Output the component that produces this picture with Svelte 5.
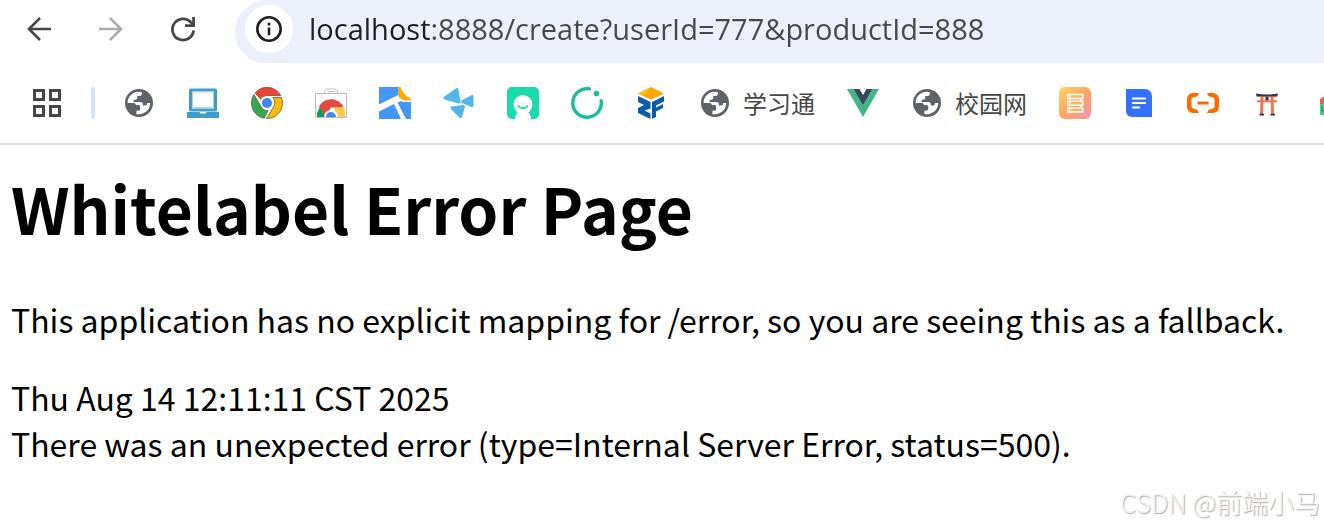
<script lang="ts">
  type Bookmark = { icon: string; label?: string; title: string };

  let url = $state('localhost:8888/create?userId=777&productId=888');

  const bookmarks: Bookmark[] = [
    { icon: 'globe', title: 'Site' },
    { icon: 'laptop', title: 'Laptop' },
    { icon: 'chrome', title: 'Chrome' },
    { icon: 'store', title: 'Web Store' },
    { icon: 'map', title: 'Map' },
    { icon: 'fan', title: 'Fan' },
    { icon: 'face', title: 'Face' },
    { icon: 'ring', title: 'Ring' },
    { icon: 'cube', title: 'ZF' },
    { icon: 'globe', label: '学习通', title: '学习通' },
    { icon: 'vue', title: 'Vue' },
    { icon: 'globe', label: '校园网', title: '校园网' },
    { icon: 'server', title: 'Server' },
    { icon: 'doc', title: 'Docs' },
    { icon: 'cloud', title: 'Cloud' },
    { icon: 'torii', title: 'Torii' },
    { icon: 'house', title: 'House' },
  ];
</script>

<div class="browser">
  <header class="toolbar">
    <nav class="nav">
      <button aria-label="Back">
        <svg viewBox="0 0 32 32" fill="none" stroke="#474747" stroke-width="2.6">
          <path d="M28 16H6M17 5 6 16l11 11" />
        </svg>
      </button>
      <button aria-label="Forward" disabled>
        <svg viewBox="0 0 32 32" fill="none" stroke="#ababab" stroke-width="2.6">
          <path d="M4 16h22M15 5l11 11-11 11" />
        </svg>
      </button>
      <button aria-label="Reload">
        <svg viewBox="0 0 32 32" fill="none" stroke="#474747" stroke-width="2.8">
          <path d="M26.6 17.500A10.600 10.600 0 1 1 24.600 10.200L26 12M26.600 4v8.600H18" />
        </svg>
      </button>
    </nav>
    <div class="omnibox">
      <button class="info" aria-label="View site information">
        <svg viewBox="0 0 28 28" fill="none" stroke="#1f1f1f" stroke-width="2.6">
          <circle cx="14" cy="14" r="11.7" />
          <path d="M14 12.600v7.600M14 7.800v2.600" />
        </svg>
      </button>
      <input class="url" type="text" aria-label="Address" spellcheck="false" bind:value={url} />
    </div>
  </header>

  <nav class="bookmarks" aria-label="Bookmarks">
    <button class="apps" aria-label="All apps">
      <svg viewBox="0 0 28 28" fill="none" stroke="#474747" stroke-width="3">
        <path d="M1.500 1.500h9v9h-9zM17.500 1.500h9v9h-9zM1.500 17.500h9v9h-9zM17.500 17.500h9v9h-9z" />
      </svg>
    </button>
    <span class="separator"></span>
    {#each bookmarks as { icon, label, title }}
      <a class="bookmark" href="#top" {title} aria-label={title}>
        <svg viewBox="0 0 32 32" aria-hidden="true">
          {#if icon === 'globe'}
            <circle cx="16" cy="16" r="14" fill="#5f6368" />
            <path fill="#fff" d="M4.600 16C4.600 9.500 9.700 4.800 16 4.800l2.800.4v1.600c0 1.500-1 2.300-2.600 2.300h-2v2c0 1-.8 1.700-1.800 1.700h-1.800V15h6.600c1.600 0 2.600.9 2.600 2v1.500h2.400c1.500 0 1.800-1.200 1.800-2.500h3.200C27.200 22.500 22 27.200 16 27.200c-1 0-1.600 0-2.600-.3v-3.200H15c1.400 0 2.200-.8 2.200-2v-1.800c0-1.200-.8-1.900-2-1.900h-2L11.500 16z" />
          {:else if icon === 'laptop'}
            <path fill="none" stroke="#3e9dcd" stroke-width="3" stroke-linejoin="round" d="M3.500 3h25v20h-25z" />
            <path fill="none" stroke="#a9d5ea" d="M5.500 5h21v15.500h-21z" />
            <path fill="#3e9dcd" d="M0 25h12.500l1 1.600h5l1-1.600H32v6H0z" />
          {:else if icon === 'chrome'}
            <circle cx="16" cy="16" r="15.500" fill="#fff" />
            <g stroke="#6b5a35" stroke-width=".8">
              <path fill="#ea4335" d="M4 6A15.500 15.500 0 0 1 29.700 8.500H16A8 8 0 0 0 9.500 12z" />
              <path fill="#34a853" d="M3 7.500 10 19.500a7.500 7.500 0 0 0 7 4L13.300 31.300A15.500 15.500 0 0 1 3 7.500z" />
              <path fill="#fbbc05" d="M30.500 10.500A15.500 15.500 0 0 1 15.500 31.500L22.500 20a7.500 7.500 0 0 0-.8-9.500z" />
            </g>
            <circle cx="16" cy="16" r="5" fill="#4285f4" />
          {:else if icon === 'store'}
            <path fill="#fff" stroke="#bbb" d="M.5 6.500h31v24H.5zM9.500 6.500v-2l2-2.500h9l2 2.500v2zM12.500 4.500h7" />
            <path fill="#e04a3f" d="M4 20C8 10 24 9 28.500 20.500H16l-5.500 9z" />
            <path fill="#0f9d58" d="M2 30v-4l3-6 5.500 10z" />
            <path fill="#ffcd40" d="M19 20.500h10.500L30 30h-9z" />
            <path fill="#fff" d="M9 30a7 7 0 1 1 14 0z" />
            <path fill="#4285f4" d="M11 30a5 5 0 1 1 10 0z" />
          {:else if icon === 'map'}
            <path fill="#4397fb" d="M0 0h32v32H0z" />
            <path fill="#fff" d="M20 0h12v15h-9zM0 17.500 19 8l4.500 5.500-5 2L27 32h-5l-7-15L0 24.500z" />
            <path fill="#f9ab0b" d="M19 0h2.500c1.500 5 5 9 10.500 12v1.500h-8L19 9z" />
          {:else if icon === 'fan'}
            <g fill="#51b7e8" stroke="#51b7e8" stroke-width="3" stroke-linejoin="round">
              <path d="M2 11 14 2.500l2 12.500zM19.500 14.500 29 9.500v9zM9 21l11.500-1.500-3 10z" />
            </g>
          {:else if icon === 'face'}
            <rect width="32" height="32" rx="5" fill="#18dcab" />
            <circle cx="16" cy="17.500" r="9.500" fill="#fff" />
            <path fill="#fff" d="M8 32c.3-3.500 1.500-6 3-7h10c1.500 1 2.700 3.500 3 7z" />
            <path fill="none" stroke="#18dcab" stroke-width="1.800" stroke-linecap="round" d="M11.500 19c2 3 7 3 9 0" />
          {:else if icon === 'ring'}
            <path fill="none" stroke="#19bc9c" stroke-width="3.400" stroke-linecap="round" d="M18.500 1.900A14.300 14.300 0 1 0 30.200 13.800" />
            <circle cx="25.500" cy="6.500" r="2.800" fill="#19bc9c" />
          {:else if icon === 'cube'}
            <path fill="#faa707" d="m16 0 13 6.500-13 6.200L3 6.500z" />
            <path fill="#fbc313" d="M16 0 3 6.500l5 2.400z" />
            <path fill="#0b5cad" d="m3 9 12.500 6v6.500l-6 2 6 3V32L3 26v-5l6-3-6-3zM29 9l-12 6v17l4-2v-5.500l7-3.500v-4l-7 3.500v-2l8-4z" />
          {:else if icon === 'vue'}
            <path fill="#41b883" d="M0 2h6.500L16 18.500 25.500 2H32L16 30z" />
            <path fill="#35495e" d="M6.500 2h6L16 8l3.500-6h6L16 18.500z" />
          {:else if icon === 'server'}
            <defs>
              <linearGradient id="peach" x1="0" y1="0" x2="1" y2="1">
                <stop offset="0" stop-color="#ffd65c" />
                <stop offset=".5" stop-color="#ffa762" />
                <stop offset="1" stop-color="#f490b0" />
              </linearGradient>
            </defs>
            <rect width="32" height="32" rx="6" fill="url(#peach)" />
            <path fill="#ffb45e" stroke="#fff" stroke-width="1.500" d="M8.700 7.500h15v4h-15zM8.700 14.200h15v4h-15zM8.700 21h15v4h-15z" />
            <path stroke="#fff" stroke-width="1.200" d="M11 8v3M11 14.500v3M11 21.500v3M10.500 11.500v3M22 11.500v3M10.500 18v3M22 18v3" />
          {:else if icon === 'doc'}
            <path fill="#3370ff" d="M3 2h19a7 7 0 0 1 7 7v21H9a6 6 0 0 1-6-6z" />
            <path stroke="#fff" stroke-width="1.800" stroke-linecap="round" d="M9.800 11.500h12.500M9.800 16h12.500M9.800 20.500h6.500" />
          {:else if icon === 'cloud'}
            <path fill="#ff6a00" d="M12 6H6a6 6 0 0 0-6 6v8a6 6 0 0 0 6 6h6l-1.500-3-4.500-1.400a2 2 0 0 1-1.500-2v-7.200a2 2 0 0 1 1.500-2L10.500 9zM20 6h6a6 6 0 0 1 6 6v8a6 6 0 0 1-6 6h-6l1.500-3 4.500-1.400a2 2 0 0 0 1.500-2v-7.200a2 2 0 0 0-1.500-2L21.500 9zM10.500 14.500h11v3h-11z" />
          {:else if icon === 'torii'}
            <path fill="#ee7350" d="M5.500 8.500h21V10h-21zM6 13.200h20v2.100H6zM9.500 10h3l-.4 17H9zM19.500 10h3l.6 17h-3.100zM14.800 10h2.500v4h-2.500z" />
            <path fill="#2f3550" d="M5 6.500c7 1.300 15 1.300 22 0L26.500 9c-7 .6-14 .6-21 0zM14.500 10h3v3h-3zM8.500 26.800h4.500v1.700H8.500zM19.500 26.800H24v1.700h-4.500z" />
          {:else}
            <path fill="#d9694a" d="m5 12 3-2 8-1 9 5v4H5z" />
            <path fill="#3ccf85" d="M5 17h20v11H5z" />
            <path fill="none" stroke="#23804f" d="M7 19v5h5" />
          {/if}
        </svg>
        {#if label}<span>{label}</span>{/if}
      </a>
    {/each}
  </nav>

  <main class="page">
    <h1>Whitelabel Error Page</h1>
    <p>This application has no explicit mapping for /error, so you are seeing this as a fallback.</p>
    <div>Thu Aug 14 12:11:11 CST 2025</div>
    <div>There was an unexpected error (type=Internal Server Error, status=500).</div>
  </main>

  <span class="watermark">CSDN @前端小马</span>
</div>

<style>
  :global(body) {
    margin: 0;
    background: #fff;
  }

  .browser {
    position: relative;
    min-height: 100vh;
    overflow: hidden;
    color: #000;
    font-family: 'Noto Sans CJK SC', sans-serif;
  }

  button {
    display: flex;
    padding: 0;
    border: 0;
    background: none;
    cursor: pointer;
  }

  svg {
    display: block;
    flex: none;
    width: 32px;
    height: 32px;
  }

  .toolbar {
    display: flex;
    gap: 36px;
    padding-left: 23px;
  }

  .nav {
    display: flex;
    align-items: center;
    gap: 40px;
    height: 58px;
  }

  /* The pill runs off the right edge of the window */
  .omnibox {
    display: flex;
    flex: 1;
    align-items: center;
    gap: 16px;
    height: 58px;
    padding: 0 0 5px 10px;
    border-radius: 34px 0 0 32px;
    background: #ecf0fa;
  }

  .info {
    flex: none;
    align-items: center;
    justify-content: center;
    width: 48px;
    height: 48px;
    border-radius: 50%;
    background: #fff;
  }

  .info svg {
    width: 28px;
    height: 28px;
  }

  /* Host is darker than the rest of the address */
  .url {
    flex: 1;
    min-width: 0;
    padding: 0;
    border: 0;
    outline: 0;
    background: linear-gradient(to right, #1f1f1f 122px, #474747 122px);
    background-clip: text;
    color: transparent;
    font: 29px/40px 'Open Sans', 'Noto Sans', sans-serif;
  }

  .bookmarks {
    display: flex;
    align-items: center;
    gap: 32px;
    height: 80px;
    padding-left: 33px;
    border-bottom: 2px solid #e0e0e0;
  }

  .apps svg {
    width: 28px;
    height: 28px;
  }

  .separator {
    flex: none;
    width: 4px;
    height: 32px;
    margin: 0 -4px 0 -2px;
    border-radius: 2px;
    background: #d3e3fd;
  }

  .bookmark {
    display: flex;
    flex: none;
    align-items: center;
    gap: 12px;
    color: #474747;
    font-size: 24px;
    line-height: 32px;
    text-decoration: none;
  }

  .page {
    padding: 14px 11px;
    font-size: 32px;
    line-height: 46px;
  }

  h1 {
    margin: 0 0 41px;
    font-size: 64px;
    font-weight: 700;
    line-height: 96px;
  }

  p {
    margin: 0 0 32px;
  }

  .watermark {
    position: absolute;
    right: 4px;
    bottom: 6px;
    color: #f4f4f4;
    font-size: 26px;
    font-weight: 300;
    line-height: 36px;
    text-shadow: 1px 1px 1px #aaa;
  }
</style>
